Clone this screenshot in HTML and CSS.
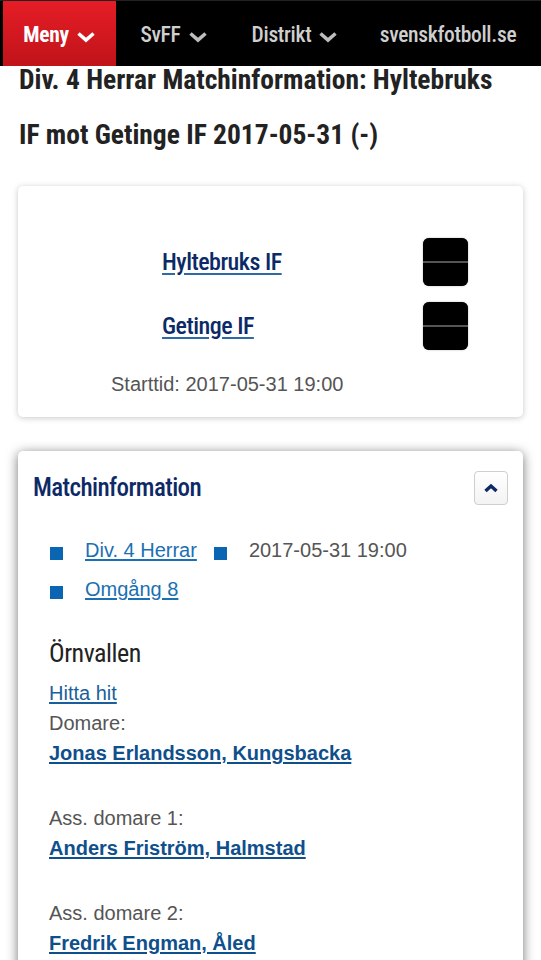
FILE: index.html
```html
<!DOCTYPE html>
<html lang="sv">
<head>
<meta charset="utf-8">
<title>Div. 4 Herrar Matchinformation</title>
<link rel="stylesheet" href="styles.css">
</head>
<body>
<nav class="topnav">
  <a class="nav-item nav-menu" href="#">Meny <svg class="chev" viewBox="0 0 20 12" width="20" height="12"><polyline points="2.5,2.5 10,9 17.5,2.5"/></svg></a>
  <a class="nav-item nav-svff" href="#">SvFF <svg class="chev" viewBox="0 0 20 12" width="20" height="12"><polyline points="2.5,2.5 10,9 17.5,2.5"/></svg></a>
  <a class="nav-item nav-distrikt" href="#">Distrikt <svg class="chev" viewBox="0 0 20 12" width="20" height="12"><polyline points="2.5,2.5 10,9 17.5,2.5"/></svg></a>
  <a class="nav-item nav-site" href="#">svenskfotboll.se</a>
</nav>

<main class="page">
  <h1 class="page-title">Div. 4 Herrar Matchinformation: Hyltebruks IF mot Getinge IF 2017-05-31 (-)</h1>

  <section class="card match-card">
    <div class="team-row">
      <a class="team-name" href="#">Hyltebruks IF</a>
      <div class="score"><span class="score-half"></span><span class="score-half"></span></div>
    </div>
    <div class="team-row">
      <a class="team-name" href="#">Getinge IF</a>
      <div class="score"><span class="score-half"></span><span class="score-half"></span></div>
    </div>
    <p class="starttime">Starttid: 2017-05-31 19:00</p>
  </section>

  <section class="card info-card">
    <header class="info-head">
      <h2 class="info-title">Matchinformation</h2>
      <button class="collapse-btn" type="button" aria-label="Dölj">
        <svg viewBox="0 0 16 10" width="16" height="10"><polyline points="2.5,8 8,3 13.5,8"/></svg>
      </button>
    </header>
    <div class="info-body">
      <ul class="meta-list">
        <li><a href="#">Div. 4 Herrar</a></li>
        <li><span class="muted">2017-05-31 19:00</span></li>
        <li><a href="#">Omgång 8</a></li>
      </ul>
      <h3 class="venue">Örnvallen</h3>
      <a class="find-link" href="#">Hitta hit</a>
      <div class="ref-group">
        <div class="ref-label">Domare:</div>
        <a class="ref-name" href="#">Jonas Erlandsson, Kungsbacka</a>
      </div>
      <div class="ref-group">
        <div class="ref-label">Ass. domare 1:</div>
        <a class="ref-name" href="#">Anders Friström, Halmstad</a>
      </div>
      <div class="ref-group">
        <div class="ref-label">Ass. domare 2:</div>
        <a class="ref-name" href="#">Fredrik Engman, Åled</a>
      </div>
    </div>
  </section>
</main>
</body>
</html>
```

FILE: styles.css
```css
* { box-sizing: border-box; }

html, body {
  margin: 0;
  padding: 0;
  background: #fff;
}

body {
  font-family: "Liberation Sans", Arial, sans-serif;
  font-size: 20px;
  color: #555;
}

.topnav {
  position: fixed;
  top: 0;
  left: 0;
  right: 0;
  height: 66px;
  background: #000;
  border-top: 1px solid #222;
  padding-left: 3px;
  display: flex;
  align-items: stretch;
  z-index: 10;
}

.nav-item {
  display: flex;
  align-items: center;
  justify-content: center;
  gap: 7px;
  color: #cfcfcf;
  text-decoration: none;
  font-family: Roboto, sans-serif;
  font-stretch: 75%;
  font-size: 21.5px;
  letter-spacing: -0.3px;
  font-weight: 500;
  padding-top: 2px;
}

.nav-item .chev {
  fill: none;
  stroke: #bdbdbd;
  stroke-width: 3.6;
  stroke-linecap: butt;
  stroke-linejoin: miter;
  margin-top: 4px;
}

.nav-menu {
  width: 113px;
  background: linear-gradient(#e61d26, #c0131a);
  color: #fff;
  font-weight: bold;
}

.nav-menu .chev { stroke: #fff; }

.nav-svff { width: 116px; }
.nav-distrikt { width: 126px; }
.nav-site { width: 180px; }

.page {
  padding: 52px 18px 0 18px;
}

.page-title {
  margin: 0 0 24px 1px;
  padding-right: 30px;
  font-family: Roboto, sans-serif;
  font-stretch: 75%;
  font-weight: 700;
  font-size: 27.5px;
  line-height: 55px;
  color: #222;
}

.card {
  background: #fff;
  border-radius: 5px;
}

.match-card {
  box-shadow: 0 1px 6px rgba(0, 0, 0, 0.22);
  padding: 52px 55px 18px 0;
}

.team-row {
  display: flex;
  align-items: center;
  height: 48px;
  padding-left: 144px;
}

.team-row + .team-row { margin-top: 16px; }

.team-name {
  flex: 1;
  font-family: Roboto, sans-serif;
  font-stretch: 75%;
  font-size: 24px;
  font-weight: 500;
  letter-spacing: -0.5px;
  color: #0b2a66;
  text-decoration-color: #2f69a8;
  text-underline-offset: 3px;
}

.score {
  width: 45px;
  height: 48px;
  display: flex;
  flex-direction: column;
  gap: 2px;
  border-radius: 6px;
  background: #555;
  box-shadow: 0 0 2px rgba(0,0,0,0.3);
  overflow: hidden;
}

.score-half {
  flex: 1;
  background: #000;
}

.starttime {
  margin: 19px 0 0 93px;
  line-height: 30px;
  color: #555;
}

.info-card {
  margin-top: 34px;
  box-shadow: 0 2px 12px rgba(0, 0, 0, 0.55);
  padding-bottom: 20px;
}

.info-head {
  display: flex;
  align-items: center;
  justify-content: space-between;
  padding: 19px 15px 0 15px;
}

.info-title {
  margin: 0;
  font-family: Roboto, sans-serif;
  font-stretch: 75%;
  font-weight: 500;
  font-size: 25px;
  letter-spacing: -0.6px;
  line-height: 36px;
  color: #0d2a66;
}

.collapse-btn {
  width: 34px;
  height: 34px;
  padding: 0;
  border: 1px solid #cfcfcf;
  border-radius: 4px;
  background: linear-gradient(#ffffff, #f3f3f3);
  display: flex;
  align-items: center;
  justify-content: center;
}

.collapse-btn svg {
  fill: none;
  stroke: #0d2a66;
  stroke-width: 3.4;
}

.info-body {
  padding: 29px 15px 0 31px;
}

.meta-list {
  list-style: none;
  margin: 0;
  padding: 0 0 0 1px;
  display: flex;
  flex-wrap: wrap;
  row-gap: 9px;
}

.meta-list li {
  display: flex;
  align-items: center;
  line-height: 30px;
  margin-right: 17px;
}

.meta-list li::before {
  content: "";
  width: 13px;
  height: 13px;
  background: #0a66b2;
  margin-right: 22px;
  margin-top: 7px;
}

.meta-list a {
  color: #1a70b3;
  text-underline-offset: 2px;
}

.muted { color: #555; }

.venue {
  margin: 24px 0 0 0;
  font-family: Roboto, sans-serif;
  font-stretch: 75%;
  font-weight: 400;
  font-size: 26px;
  letter-spacing: -0.5px;
  line-height: 50px;
  color: #222;
}

.find-link {
  display: block;
  line-height: 30px;
  color: #1a5f9c;
  text-underline-offset: 2px;
}

.ref-group { margin-bottom: 35px; }

.ref-label {
  line-height: 30px;
  color: #555;
}

.ref-name {
  display: block;
  line-height: 30px;
  font-weight: bold;
  color: #0f4f8c;
  text-underline-offset: 2px;
}
```
